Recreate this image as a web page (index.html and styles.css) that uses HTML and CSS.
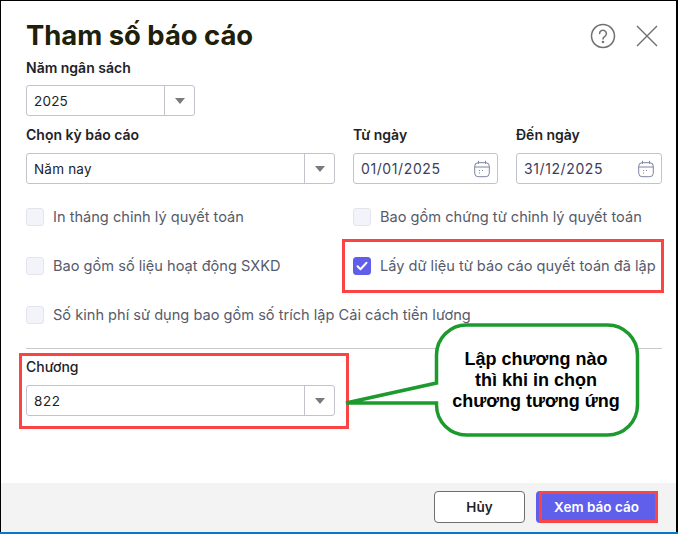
FILE: index.html
```html
<!DOCTYPE html>
<html lang="vi">
<head>
<meta charset="utf-8">
<title>Tham số báo cáo</title>
<link rel="stylesheet" href="styles.css">
</head>
<body>
<div class="dialog">
  <header class="head">
    <h1 class="title">Tham số báo cáo</h1>
    <div class="head-icons">
      <svg class="ico-help" width="26" height="26" viewBox="0 0 26 26" fill="none" stroke="#6f6f6f" stroke-width="1.5" stroke-linecap="round"><circle cx="13" cy="13" r="11.5"/><path d="M9.6 10.6a3.4 3.4 0 1 1 5.3 2.8c-1.1.7-1.9 1.3-1.9 2.6"/><circle cx="13" cy="19" r=".5" fill="#6f6f6f"/></svg>
      <svg width="22" height="22" viewBox="0 0 22 22" fill="none" stroke="#6f6f6f" stroke-width="1.4"><path d="M1 1l20 20M21 1L1 21"/></svg>
    </div>
  </header>
  <main class="body">
    <label class="label">Năm ngân sách</label>
    <div class="combo combo-short"><span class="val">2025</span><span class="arrow"><i class="tri"></i></span></div>

    <div class="period">
      <div>
        <label class="label">Chọn kỳ báo cáo</label>
        <div class="combo"><span class="val">Năm nay</span><span class="arrow"><i class="tri"></i></span></div>
      </div>
      <div>
        <label class="label">Từ ngày</label>
        <div class="date"><span>01/01/2025</span>
          <svg width="16" height="18" viewBox="0 0 16 18" fill="none" stroke="#7d83a0" stroke-width="1"><rect x=".7" y="2.7" width="14.6" height="14" rx="3.5"/><path d="M.7 7h14.6M4.5 .8v3M11.5 .8v3M5 10.5h1M8 10.5h1M5 13h1"/></svg>
        </div>
      </div>
      <div>
        <label class="label">Đến ngày</label>
        <div class="date"><span>31/12/2025</span>
          <svg width="16" height="18" viewBox="0 0 16 18" fill="none" stroke="#7d83a0" stroke-width="1"><rect x=".7" y="2.7" width="14.6" height="14" rx="3.5"/><path d="M.7 7h14.6M4.5 .8v3M11.5 .8v3M5 10.5h1M8 10.5h1M5 13h1"/></svg>
        </div>
      </div>
    </div>

    <div class="checks">
      <div class="check"><i class="box"></i>In tháng chỉnh lý quyết toán</div>
      <div class="check"><i class="box"></i>Bao gồm chứng từ chỉnh lý quyết toán</div>
      <div class="check"><i class="box"></i>Bao gồm số liệu hoạt động SXKD</div>
      <div class="check"><i class="box box-on"><svg width="12" height="10" viewBox="0 0 12 10" fill="none" stroke="#fff" stroke-width="2" stroke-linecap="round" stroke-linejoin="round"><path d="M1.5 5.2l3 3 6-6.4"/></svg></i>Lấy dữ liệu từ báo cáo quyết toán đã lập</div>
      <div class="check check-wide"><i class="box"></i>Số kinh phí sử dụng bao gồm số trích lập Cải cách tiền lương</div>
    </div>

    <hr class="rule">

    <label class="label label-ch">Chương</label>
    <div class="combo combo-ch"><span class="val val-wide">822</span><span class="arrow"><i class="tri"></i></span></div>
  </main>
  <footer class="foot">
    <button class="btn btn-cancel">Hủy</button>
    <button class="btn btn-main">Xem báo cáo</button>
  </footer>
</div>

<div class="mark mark-check"></div>
<div class="mark mark-ch"></div>
<div class="mark mark-btn"></div>

<svg class="callout-shape" width="300" height="116" viewBox="0 0 300 116" fill="#fff" stroke="#1c9a2d" stroke-width="3.5"><path d="M122.500 2h141a30 30 0 0 1 30 30v50a30 30 0 0 1-30 30h-141a30 30 0 0 1-30-30V80H2l90.500-20V32a30 30 0 0 1 30-30z" stroke-linejoin="miter"/></svg>
<div class="callout-text">Lập chương nào<br>thì khi in chọn<br>chương tương ứng</div>
</body>
</html>
```

FILE: styles.css
```css
* { box-sizing: border-box; }
html, body { margin: 0; height: 100%; }
body {
  width: 678px;
  height: 534px;
  overflow: hidden;
  position: relative;
  background: #000;
  font-family: Inter, "Liberation Sans", sans-serif;
  color: #1f1f24;
}
.dialog {
  position: absolute;
  left: 1px; top: 1px;
  width: 675px;
  height: 531px;
  background: #fff;
  display: flex;
  flex-direction: column;
}
.head {
  height: 57px;
  padding: 15px 18px 0 25px;
  display: flex;
  justify-content: space-between;
  align-items: flex-start;
}
.title {
  margin: 0;
  font-size: 27.4px;
  line-height: 38px;
  font-weight: 700;
  color: #20200a;
}
.head-icons { display: flex; gap: 20px; align-items: center; padding-top: 7px; }
.head-icons svg { display: block; }
.body { flex: 1; padding: 0 14px 0 25px; }
.label {
  display: block;
  font-size: 14px;
  line-height: 20px;
  font-weight: 600;
  color: #222226;
  margin-bottom: 7px;
}
.combo {
  height: 31px;
  border: 1px solid #c3c3d0;
  border-radius: 3px;
  display: flex;
  align-items: center;
  background: #fff;
}
.combo-short { width: 169px; margin-bottom: 9px; }
.val {
  flex: 1;
  padding-left: 7px;
  font-size: 13.5px;
  letter-spacing: .2px;
  color: #222226;
}
.val-wide { letter-spacing: .6px; }
.arrow {
  width: 30px;
  height: 100%;
  border-left: 1px solid #c3c3d0;
  display: flex;
  align-items: center;
  justify-content: center;
}
.tri {
  width: 0; height: 0;
  border-left: 5px solid transparent;
  border-right: 5px solid transparent;
  border-top: 6px solid #7a7a7a;
  margin-top: 1px;
}
.period {
  display: grid;
  grid-template-columns: 309px 145px 146px;
  column-gap: 18px;
}
.period .label { margin-bottom: 8px; }
.date {
  height: 31px;
  border: 1px solid #c3c3d0;
  border-radius: 3px;
  display: flex;
  align-items: center;
  justify-content: space-between;
  padding: 0 7px;
  font-size: 14px;
  letter-spacing: .6px;
  color: #3a3d5c;
}
.date svg { display: block; }
.checks {
  margin-top: 24px;
  display: grid;
  grid-template-columns: 327px 1fr;
  grid-auto-rows: 18px;
  row-gap: 31px;
}
.check {
  display: flex;
  align-items: center;
  gap: 9px;
  font-size: 14.6px;
  line-height: 18px;
  color: #565b6b;
  white-space: nowrap;
}
.check-wide { grid-column: 1 / 3; }
.box {
  width: 18px; height: 18px;
  flex: none;
  border: 1px solid #e3e4ee;
  border-radius: 3px;
  background: #f3f4f9;
  display: flex;
  align-items: center;
  justify-content: center;
}
.box-on { background: #5f5fec; border-color: #5f5fec; }
.rule {
  margin: 24px 0 0;
  border: 0;
  border-top: 1px solid #c8c8cc;
  width: 636px;
}
.label-ch { margin-top: 8px; font-weight: 500; margin-bottom: 8px; }
.combo-ch, .period .combo { width: 309px; }
.foot {
  height: 49px;
  background: #f3f3f3;
  display: flex;
  justify-content: flex-end;
  gap: 11px;
  padding: 8px 19px 0 0;
  align-items: flex-start;
}
.btn {
  height: 32px;
  border-radius: 4px;
  font-family: inherit;
  font-size: 13.5px;
  font-weight: 600;
  padding: 0;
}
.btn-cancel { width: 91px; background: #fff; border: 1px solid #6e6e6e; color: #222226; }
.btn-main { width: 121px; background: #5f5fec; border: 0; color: #fff; }
body::after {
  content: "";
  position: absolute;
  left: 0; right: 0; bottom: 0;
  height: 2px;
  background: #0a78c8;
}
.mark { position: absolute; border: 3px solid #fb4444; }
.mark-check { left: 342px; top: 239px; width: 322px; height: 54px; }
.mark-ch { left: 19px; top: 353px; width: 330px; height: 76px; }
.mark-btn { left: 539px; top: 491px; width: 119px; height: 32px; }
.callout-shape { position: absolute; left: 344px; top: 323px; }
.callout-text {
  position: absolute;
  left: 436px; top: 349px;
  width: 200px;
  text-align: center;
  font-family: "Liberation Sans", Arial, sans-serif;
  font-weight: 700;
  font-size: 18px;
  line-height: 21px;
  color: #000;
}
```
